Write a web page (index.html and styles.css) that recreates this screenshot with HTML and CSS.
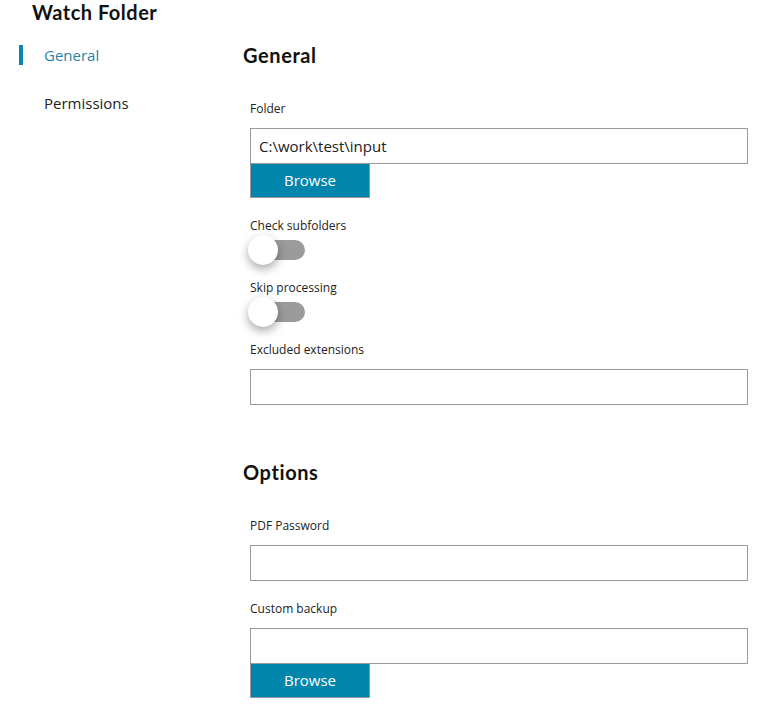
FILE: index.html
```html
<!DOCTYPE html>
<html>
<head>
<meta charset="utf-8">
<link rel="stylesheet" href="styles.css">
</head>
<body>
<div class="page">
  <h1 class="title">Watch Folder</h1>
  <div class="layout">
    <nav class="nav">
      <div class="nav-item active">General</div>
      <div class="nav-item">Permissions</div>
    </nav>
    <main class="main">
      <section class="section">
        <h2 class="section-title">General</h2>
        <div class="field">
          <label class="label">Folder</label>
          <div class="input">C:\work\test\input</div>
          <div class="btn">Browse</div>
        </div>
        <div class="field toggle-field">
          <label class="label">Check subfolders</label>
          <div class="toggle"><div class="knob"></div></div>
        </div>
        <div class="field toggle-field">
          <label class="label">Skip processing</label>
          <div class="toggle"><div class="knob"></div></div>
        </div>
        <div class="field">
          <label class="label">Excluded extensions</label>
          <div class="input"></div>
        </div>
      </section>
      <section class="section options">
        <h2 class="section-title">Options</h2>
        <div class="field">
          <label class="label">PDF Password</label>
          <div class="input"></div>
        </div>
        <div class="field">
          <label class="label">Custom backup</label>
          <div class="input"></div>
          <div class="btn">Browse</div>
        </div>
      </section>
    </main>
  </div>
</div>
</body>
</html>
```

FILE: styles.css
```css
* { box-sizing: border-box; }
html, body { margin: 0; padding: 0; background: #fff; }
body { font-family: "Open Sans", "Liberation Sans", sans-serif; color: #222; }
.page { padding: 0 0 0 32px; }
.title {
  font-family: "Lato", "Open Sans", sans-serif;
  font-weight: 700;
  font-size: 20px;
  line-height: 24px;
  margin: 0;
  color: #111;
  letter-spacing: 0.5px;
}
.layout { display: flex; margin-left: -32px; margin-top: 21px; }
.nav { width: 243px; flex: none; }
.nav-item {
  position: relative;
  padding-left: 44px;
  font-size: 15px;
  line-height: 20px;
  height: 20px;
  margin-bottom: 28px;
  color: #222;
}
.nav-item.active { color: #2a82a8; }
.nav-item.active::before {
  content: "";
  position: absolute;
  left: 19px;
  top: 0;
  width: 4px;
  height: 20px;
  background: #0a86ad;
}
.main { width: 505px; }
.section-title {
  font-family: "Lato", "Open Sans", sans-serif;
  font-weight: 700;
  font-size: 20px;
  line-height: 26px;
  margin: -3px 0 0 0;
  color: #111;
  letter-spacing: 0.6px;
}
.field { padding-left: 7px; }
.label {
  display: block;
  font-size: 12px;
  line-height: 16px;
  color: #222;
  margin-top: 20px;
}
.section-title + .field .label { margin-top: 33px; }
.input {
  height: 36px;
  border: 1px solid #999;
  margin-top: 11px;
  font-size: 15px;
  line-height: 34px;
  padding-left: 8px;
  color: #222;
}
.btn {
  width: 120px;
  height: 34px;
  background: #0085ad;
  color: #fff;
  border: 1px solid #999;
  border-top: none;
  font-size: 15px;
  line-height: 33px;
  text-align: center;
}
.toggle {
  position: relative;
  width: 55px;
  height: 20px;
  margin-top: 6px;
  background: #9b9b9b;
  border-radius: 10px;
}
.knob {
  position: absolute;
  left: -2px;
  top: -5px;
  width: 30px;
  height: 30px;
  border-radius: 50%;
  background: #fff;
  box-shadow: 0 4px 10px rgba(0,0,0,0.35);
}
.options { margin-top: 57px; }
```
